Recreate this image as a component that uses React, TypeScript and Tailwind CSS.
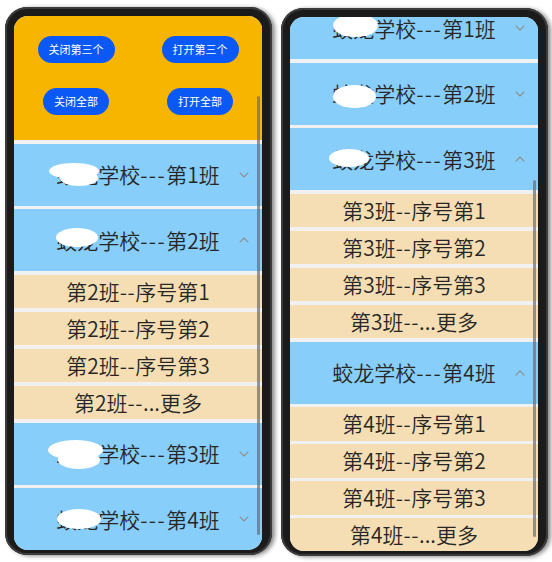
import React from "react";

const FONT = { fontFamily: '"Noto Sans CJK SC", "Noto Sans", sans-serif' };

function Chevron({ up }: { up?: boolean }) {
  return (
    <svg width="10" height="6" viewBox="0 0 10 6" className="block">
      <path
        d={up ? "M1 5.2 L5 1 L9 5.2" : "M1 0.8 L5 5 L9 0.8"}
        fill="none"
        stroke="#8f8f8f"
        strokeWidth="1.1"
        strokeLinecap="round"
        strokeLinejoin="round"
      />
    </svg>
  );
}

function Header({
  n,
  up,
  blob,
  blob2,
}: {
  n: number;
  up?: boolean;
  blob?: string;
  blob2?: string;
}) {
  return (
    <div className="relative grid h-[62px] shrink-0 grid-cols-[1fr_auto_1fr] items-center bg-[#87cefa]">
      <div />
      <div className="text-[21px] font-[350] leading-none text-[#262626] whitespace-nowrap">
        蛟龙学校<span className="tracking-[1.5px]">---</span>第{n}班
      </div>
      <div className="flex justify-end pr-[13px]">
        <Chevron up={up} />
      </div>
      {blob ? <div className={blob} /> : null}
      {blob2 ? <div className={blob2} /> : null}
    </div>
  );
}

function Items({ n }: { n: number }) {
  const rows = [
    { a: `第${n}班`, b: "序号第1" },
    { a: `第${n}班`, b: "序号第2" },
    { a: `第${n}班`, b: "序号第3" },
    { a: `第${n}班`, b: "...更多" },
  ];
  return (
    <div className="flex flex-col gap-[3.5px]">
      {rows.map((r) => (
        <div
          key={r.b}
          className="flex h-[33.5px] items-center justify-center bg-[#f5deb3] text-[21px] font-[350] leading-none text-[#262626] whitespace-nowrap"
        >
          {r.a}
          <span className="tracking-[0.5px]">--</span>
          {r.b}
        </div>
      ))}
    </div>
  );
}

function Btn({ children }: { children: React.ReactNode }) {
  return (
    <button className="flex h-[27px] items-center justify-center rounded-full bg-[#0a59f7] px-[11px] text-[11px] leading-none text-white whitespace-nowrap">
      {children}
    </button>
  );
}

function Frame({ children, extra }: { children: React.ReactNode; extra?: string }) {
  return (
    <div
      className={
        "h-[548px] w-[267px] shrink-0 rounded-[22px] bg-[#1b1b1b] pt-[9px] pl-[9px] pr-[10px] pb-[5px] shadow-[inset_0_0_0_2px_#3c3c3c,3px_1px_4px_rgba(0,0,0,0.45)] " +
        (extra ?? "")
      }
    >
      <div className="relative h-full w-full overflow-hidden rounded-[14px] bg-[#f1f1f1]">
        {children}
      </div>
    </div>
  );
}

export default function App() {
  return (
    <div className="flex h-[562px] w-[552px] items-start gap-[9px] bg-white pt-[7px] pl-[5px]" style={FONT}>
      <Frame>
        <div className="flex flex-col gap-[3.5px]">
          <div className="grid h-[124px] shrink-0 grid-cols-2 content-start gap-y-[25px] bg-[#f7b500] pt-[20px]">
            <div className="flex justify-center">
              <Btn>关闭第三个</Btn>
            </div>
            <div className="flex justify-center">
              <Btn>打开第三个</Btn>
            </div>
            <div className="flex justify-center">
              <Btn>关闭全部</Btn>
            </div>
            <div className="flex justify-center">
              <Btn>打开全部</Btn>
            </div>
          </div>
          <Header
            n={1}
            blob="absolute left-[35px] top-[19px] h-[16px] w-[50px] rounded-[50%] bg-white"
            blob2="absolute left-[46px] top-[26px] h-[16px] w-[38px] rounded-[50%] bg-white"
          />
          <Header
            n={2}
            up
            blob="absolute left-[42px] top-[19px] h-[19px] w-[42px] rounded-[50%] bg-white"
          />
          <Items n={2} />
          <Header
            n={3}
            blob="absolute left-[34px] top-[17px] h-[20px] w-[55px] rounded-[50%] bg-white"
            blob2="absolute left-[44px] top-[28px] h-[18px] w-[42px] rounded-[50%] bg-white"
          />
          <Header
            n={4}
            blob="absolute left-[43px] top-[21px] h-[20px] w-[44px] rounded-[50%] bg-white"
          />
        </div>
        <div className="absolute left-[243px] top-[80px] h-[439px] w-[2.5px] rounded-full bg-[#6b6b6b]/70" />
      </Frame>
      <Frame extra="mt-[1px]">
        <div className="-mt-[20px] flex flex-col gap-[3.5px]">
          <Header
            n={1}
            blob="absolute left-[43px] top-[17px] h-[23px] w-[45px] rounded-[50%] bg-white"
          />
          <Header
            n={2}
            blob="absolute left-[43px] top-[22px] h-[23px] w-[43px] rounded-[50%] bg-white"
          />
          <Header
            n={3}
            up
            blob="absolute left-[39px] top-[21px] h-[18px] w-[40px] rounded-[50%] bg-white"
          />
          <Items n={3} />
          <Header n={4} up />
          <Items n={4} />
        </div>
        <div className="absolute left-[243px] top-[163px] h-[357px] w-[2.5px] rounded-full bg-[#6b6b6b]/70" />
      </Frame>
      <div className="mt-[533px] h-[19px] w-[4px] shrink-0 bg-black" />
    </div>
  );
}
